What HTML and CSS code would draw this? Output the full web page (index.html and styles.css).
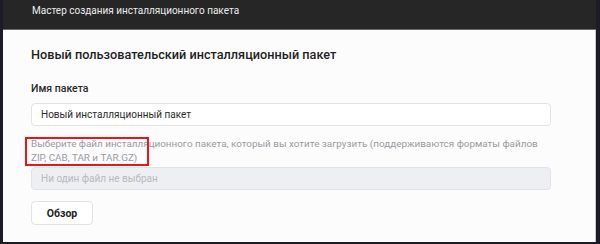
FILE: index.html
```html
<!DOCTYPE html>
<html lang="ru">
  <head>
    <meta charset="UTF-8" />
    <title>Мастер создания инсталляционного пакета</title>
    <link rel="stylesheet" href="styles.css">
  </head>
  <body>
    <div class="window">
      <div class="titlebar">Мастер создания инсталляционного пакета</div>
      <div class="panel">
        <h1 class="panel-title">Новый пользовательский инсталляционный пакет</h1>

        <div class="field">
          <label class="field-label" for="pkgName">Имя пакета</label>
          <input type="text" id="pkgName" class="text-input" value="Новый инсталляционный пакет" />
        </div>

        <div class="file-field">
          <p class="hint"><span class="mark"></span>Выберите файл инсталляционного пакета, который вы хотите загрузить (поддерживаются форматы файлов ZIP, CAB, TAR и TAR.GZ)</p>
          <input type="text" class="text-input disabled" placeholder="Ни один файл не выбран" disabled />
          <button class="browse">Обзор</button>
        </div>
      </div>
    </div>
  </body>
</html>
```

FILE: styles.css
```css
html,
body {
  margin: 0;
  height: 100%;
}

body {
  background-color: #1d1b29;
  font-family: 'Roboto', 'Noto Sans', sans-serif;
  overflow: hidden;
}

.window {
  margin-left: 3px;
  width: 593px;
  height: 242px;
  display: flex;
  flex-direction: column;
}

.titlebar {
  height: 30px;
  box-sizing: border-box;
  background-color: #262626;
  border-bottom: 1px solid #6a6a6a;
  color: #ececec;
  font-size: 10px;
  line-height: 21px;
  padding-left: 29px;
}

.panel {
  flex: 1;
  background-color: #fcfcfd;
  padding: 0 42px 0 28px;
  border-right: 1px solid #c9c9cc;
}

.panel-title {
  margin: 14px 0 0;
  font-size: 12.7px;
  font-weight: 500;
  color: #1f1f1f;
  line-height: 22px;
}

.field {
  margin-top: 14px;
  display: flex;
  flex-direction: column;
}

.field-label {
  font-size: 10.5px;
  font-weight: 500;
  color: #2a2a2a;
  line-height: 18px;
  margin-bottom: 5px;
}

.text-input {
  width: 520px;
  height: 23px;
  box-sizing: border-box;
  border: 1px solid #e3e3e6;
  border-radius: 4px;
  background-color: #fff;
  font-family: inherit;
  font-size: 10px;
  color: #2a2a2a;
  padding: 0 9px;
  margin: 0;
  outline: none;
}

.text-input.disabled {
  background-color: #eeeff2;
}

.text-input.disabled::placeholder {
  color: #b8b9bd;
}

.file-field {
  margin-top: 11px;
  display: flex;
  flex-direction: column;
  align-items: flex-start;
}

.hint {
  position: relative;
  margin: 0 0 2px;
  width: 520px;
  font-size: 9.9px;
  line-height: 14px;
  color: #9a9a9e;
}

.mark {
  position: absolute;
  left: -6px;
  top: 0;
  width: 124px;
  height: 29px;
  box-sizing: border-box;
  border: 2px solid #e8161b;
}

.browse {
  margin-top: 11px;
  width: 62px;
  height: 24px;
  border: 1px solid #e3e3e6;
  border-radius: 4px;
  background-color: #fff;
  font-family: inherit;
  font-size: 10.5px;
  font-weight: 700;
  color: #222;
  cursor: pointer;
}
```
